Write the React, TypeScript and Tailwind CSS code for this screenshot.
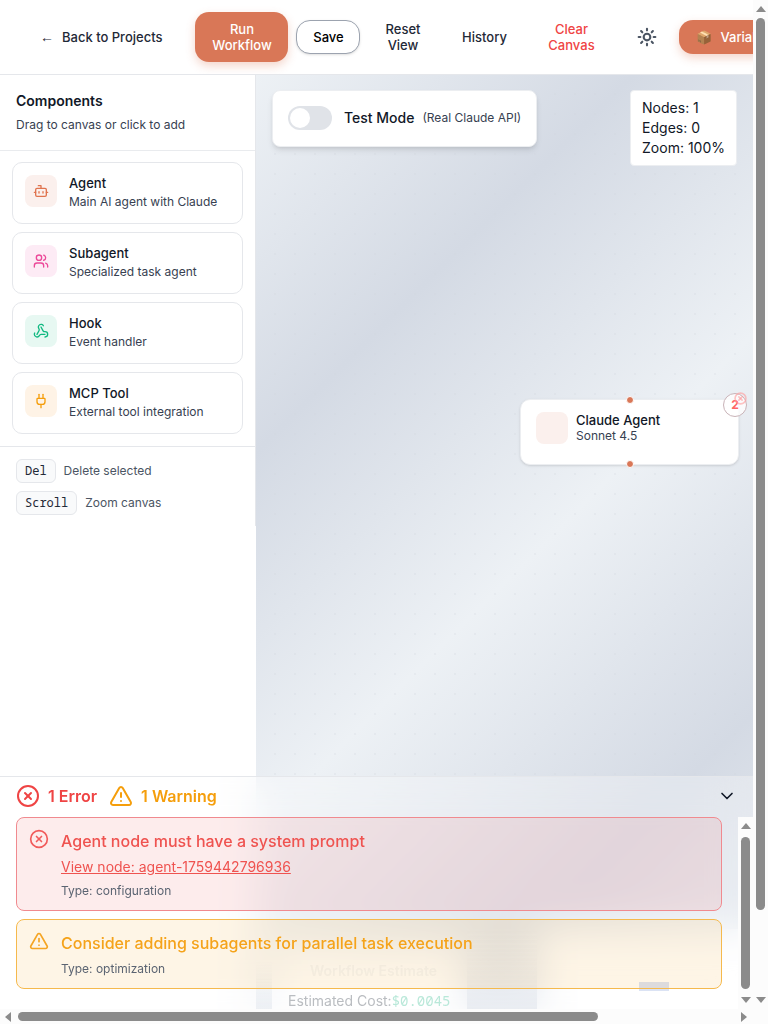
import React from "react";
import { Bot, Users, Webhook, Plug, Sun, CircleX, TriangleAlert, ChevronDown } from "lucide-react";

const components = [
  { name: "Agent", text: "Main AI agent with Claude", Icon: Bot, box: "bg-[#fbf0ed] text-[#e0744f]" },
  { name: "Subagent", text: "Specialized task agent", Icon: Users, box: "bg-[#fdebf5] text-[#ec4899]" },
  { name: "Hook", text: "Event handler", Icon: Webhook, box: "bg-[#e7f8f2] text-[#10b981]" },
  { name: "MCP Tool", text: "External tool integration", Icon: Plug, box: "bg-[#fef3e6] text-[#f59e0b]" },
];

const shortcuts = [
  { keyName: "Del", text: "Delete selected" },
  { keyName: "Scroll", text: "Zoom canvas" },
];

function Arrow({ dir }: { dir: "up" | "down" | "left" | "right" }) {
  const points = { up: "0,6 10,6 5,0", down: "0,0 10,0 5,6", left: "6,0 6,10 0,5", right: "0,0 0,10 6,5" }[dir];
  const tall = dir === "left" || dir === "right";
  return (
    <svg width={tall ? 6 : 10} height={tall ? 10 : 6} className="shrink-0 fill-[#8b8b8b]" aria-hidden="true">
      <polygon points={points} />
    </svg>
  );
}

function Header() {
  return (
    <header className="flex h-[75px] shrink-0 items-center overflow-hidden border-b border-[#e5e7eb] bg-white pl-6 text-[13px] leading-4 font-medium text-[#1f2937]">
      <button className="flex shrink-0 items-center gap-2 px-4 py-2">
        <span className="font-['Liberation_Sans',sans-serif] text-sm leading-4 font-normal">←</span>
        Back to Projects
      </button>
      <button className="ml-[17px] w-[93px] shrink-0 rounded-[14px] bg-[#d97757] px-4 py-[9px] text-white shadow-[0_4px_10px_rgba(217,119,87,0.3)]">
        Run Workflow
      </button>
      <button className="ml-2 w-16 shrink-0 rounded-[14px] border border-[#9ca3af] bg-white py-2 text-black shadow-sm">
        Save
      </button>
      <button className="ml-2 w-[69px] shrink-0 px-4 py-2">Reset View</button>
      <button className="ml-2 w-[78px] shrink-0 px-4 py-2">History</button>
      <button className="ml-2 w-20 shrink-0 px-4 py-2 text-[#ef4444]">Clear Canvas</button>
      <button aria-label="Toggle theme" className="ml-2 flex w-[56px] shrink-0 justify-center py-2 text-[#4b5563]">
        <Sun size={20} strokeWidth={2.5} />
      </button>
      <button className="ml-1 flex shrink-0 items-center gap-2 rounded-[14px] bg-[#d97757] px-4 py-[9px] text-white shadow-[0_4px_10px_rgba(217,119,87,0.3)]">
        <span className="w-[17px]">📦</span>
        Variables
      </button>
    </header>
  );
}

function Sidebar() {
  return (
    <aside className="w-64 shrink-0 bg-white">
      <div className="border-r border-[#e5e7eb] pb-[11px]">
        <div className="border-b border-[#e9ebee] px-4 pt-4 pb-[15px]">
          <h2 className="text-sm leading-5 font-semibold text-[#111827]">Components</h2>
          <p className="mt-1 text-xs leading-5 text-[#374151]">Drag to canvas or click to add</p>
        </div>
        <div className="flex flex-col gap-2 border-b border-[#e5e7eb] px-3 pt-[11px] pb-3">
          {components.map(({ name, text, Icon, box }) => (
            <button key={name} className="flex h-[62px] items-start gap-3 rounded-[10px] border border-[#e5e7eb] bg-white px-3 pt-3 text-left">
              <span className={`flex size-8 shrink-0 items-center justify-center rounded-lg ${box}`}>
                <Icon size={16} />
              </span>
              <span className="block">
                <span className="block text-[13px] leading-4 font-medium text-[#111827]">{name}</span>
                <span className="mt-0.5 block text-xs leading-[18px] text-[#374151]">{text}</span>
              </span>
            </button>
          ))}
        </div>
        <div className="flex flex-col gap-2 px-4 pt-3">
          {shortcuts.map(({ keyName, text }) => (
            <div key={keyName} className="flex items-center gap-2 text-xs text-[#4b5563]">
              <kbd className="rounded-md border border-[#e5e7eb] bg-[#f9fafb] px-2 py-[3px] font-['Noto_Sans_Mono','DejaVu_Sans_Mono',monospace] text-xs leading-4 text-[#1f2937]">
                {keyName}
              </kbd>
              {text}
            </div>
          ))}
        </div>
      </div>
    </aside>
  );
}

function Canvas() {
  return (
    <main className="relative min-w-0 flex-1 overflow-hidden bg-[linear-gradient(135deg,#edf1f5_0px,#d4dae4_267px,#edf1f5_535px,#d4dae4_803px,#edf1f5_1070px)]">
      <div className="absolute inset-0 bg-[radial-gradient(circle,#cfd4db_0.8px,transparent_1px)] bg-size-[20px_20px] bg-position-[9px_9px] opacity-25" />
      <div className="absolute top-[15px] left-4 flex h-[57px] items-center gap-3 rounded-lg border border-[#eceef1] bg-white px-[15px] pb-px shadow-md">
        <button role="switch" aria-checked="false" aria-labelledby="test-mode" className="flex h-6 w-11 items-center rounded-full bg-[#e0e3e8] p-0.5">
          <span className="size-5 rounded-full bg-white" />
        </button>
        <span className="flex items-center gap-2">
          <span id="test-mode" className="text-sm font-medium text-[#111827]">Test Mode</span>
          <span className="text-xs text-[#374151]">(Real Claude API)</span>
        </span>
      </div>
      <div className="absolute top-[15px] right-4 rounded-sm border border-[#eceef1] bg-white px-[11px] py-[7px] text-sm leading-5 text-[#111827]">
        <p>Nodes: 1</p>
        <p>Edges: 0</p>
        <p>Zoom: 100%</p>
      </div>
      <div className="absolute top-[324px] left-[264px] flex h-[66px] w-[219px] gap-2 rounded-[10px] border border-[#eceef1] bg-white px-[15px] pt-3 shadow-sm">
        <span className="size-8 rounded-lg bg-[#fbf0ed]" />
        <div>
          <p className="text-[13px] leading-4 font-medium text-[#111827]">Claude Agent</p>
          <p className="text-xs leading-4 text-[#374151]">Sonnet 4.5</p>
        </div>
        <span className="absolute -top-1 left-[105px] size-2 rounded-full border border-white bg-[#d97757]" />
        <span className="absolute -bottom-1 left-[105px] size-2 rounded-full border border-white bg-[#d97757]" />
        <span className="absolute -top-[7px] -right-[9px] flex size-6 items-center justify-center rounded-full border border-[#c9b3b8] bg-white/80 text-xs font-bold text-[#ff6464]">
          2
          <CircleX size={13} strokeWidth={3} className="absolute -top-0.5 -right-px text-[#ff9b9b]/60" />
        </span>
      </div>
      <div className="absolute bottom-0 left-4 h-16 w-[195px] bg-white" />
      <div className="absolute right-0 bottom-0 h-20 w-[216px] bg-white" />
    </main>
  );
}

function Issues() {
  return (
    <section className="absolute inset-x-0 bottom-0 h-[233px] overflow-hidden border-t border-[#e5e7eb] bg-white/30 backdrop-blur-[20px]">
      <div className="absolute bottom-0 left-64 h-12 w-4 bg-linear-to-b from-transparent to-[#edf0f4]" />
      <div className="absolute bottom-0 left-[467px] h-20 w-[70px] bg-linear-to-b from-transparent to-[#eaedf2]" />
      <div className="absolute bottom-[18px] left-[639px] h-[9px] w-[30px] bg-[#dbe3f4]" />
      <p className="absolute bottom-0 left-[288px] flex text-sm leading-4 text-[#babdc1]">
        Estimated Cost:
        <span className="font-['Noto_Sans_Mono','DejaVu_Sans_Mono',monospace] text-[#b9e8d9]">$0.0045</span>
      </p>
      <p className="absolute bottom-[30px] left-[310px] text-sm leading-4 font-semibold text-[#9ca3af]/10">Workflow Estimate</p>
      <div className="relative flex h-10 items-center gap-3 px-4 pb-0.5 text-base font-semibold">
        <span className="flex items-center gap-2 text-[#ef4444]">
          <CircleX size={24} /> 1 Error
        </span>
        <span className="flex items-center gap-2 text-[#f59e0b]">
          <TriangleAlert size={24} /> 1 Warning
        </span>
        <button aria-label="Collapse issues" className="ml-auto text-[#111827]">
          <ChevronDown size={20} />
        </button>
      </div>
      <div className="relative flex">
        <div className="flex min-w-0 flex-1 flex-col gap-2 px-4">
          <article className="flex gap-3 rounded-lg border border-[#f08a8f] bg-[#ef4444]/10 px-3 pt-[11px] pb-[9px]">
            <CircleX size={20} className="shrink-0 text-[#f15b5b]" />
            <div>
              <h3 className="text-base leading-6 font-medium text-[#ef5350]">Agent node must have a system prompt</h3>
              <a href="#agent-1759442796936" className="mt-1 block text-sm leading-5 text-[#ef5350] underline">
                View node: agent-1759442796936
              </a>
              <p className="mt-1 text-xs leading-5 text-[#5b6472]">Type: configuration</p>
            </div>
          </article>
          <article className="flex gap-3 rounded-lg border border-[#f5b94d] bg-[#f59e0b]/10 px-3 pt-[11px] pb-[9px]">
            <TriangleAlert size={20} className="shrink-0 text-[#f5a524]" />
            <div>
              <h3 className="text-base leading-6 font-medium text-[#f5a31a]">Consider adding subagents for parallel task execution</h3>
              <p className="mt-1 text-xs leading-5 text-[#5b6472]">Type: optimization</p>
            </div>
          </article>
        </div>
        <div className="flex h-[192px] w-[15px] flex-col items-center justify-between bg-[#fcfcfc] py-[6px]">
          <Arrow dir="up" />
          <span className="h-[152px] w-[9px] rounded-full bg-[#8b8b8b]" />
          <Arrow dir="down" />
        </div>
      </div>
    </section>
  );
}

export default function App() {
  return (
    <div className="flex h-screen flex-col bg-[#fcfcfc] font-['Inter','Liberation_Sans',sans-serif]">
      <div className="flex min-h-0 flex-1">
        <div className="relative flex min-w-0 flex-1 flex-col overflow-hidden bg-white">
          <Header />
          <div className="flex min-h-0 flex-1">
            <Sidebar />
            <Canvas />
          </div>
          <Issues />
        </div>
        <div className="flex w-[15px] flex-col items-center bg-[#fcfcfc] py-[6px]">
          <Arrow dir="up" />
          <span className="mt-[6px] h-[892px] w-[9px] rounded-full bg-[#8b8b8b]" />
          <span className="flex-1" />
          <Arrow dir="down" />
        </div>
      </div>
      <div className="flex h-[15px] shrink-0 items-center bg-[#fcfcfc] pr-[21px] pl-[5px]">
        <Arrow dir="left" />
        <span className="ml-[7px] h-[9px] w-[580px] rounded-full bg-[#8b8b8b]" />
        <span className="flex-1" />
        <Arrow dir="right" />
      </div>
    </div>
  );
}
